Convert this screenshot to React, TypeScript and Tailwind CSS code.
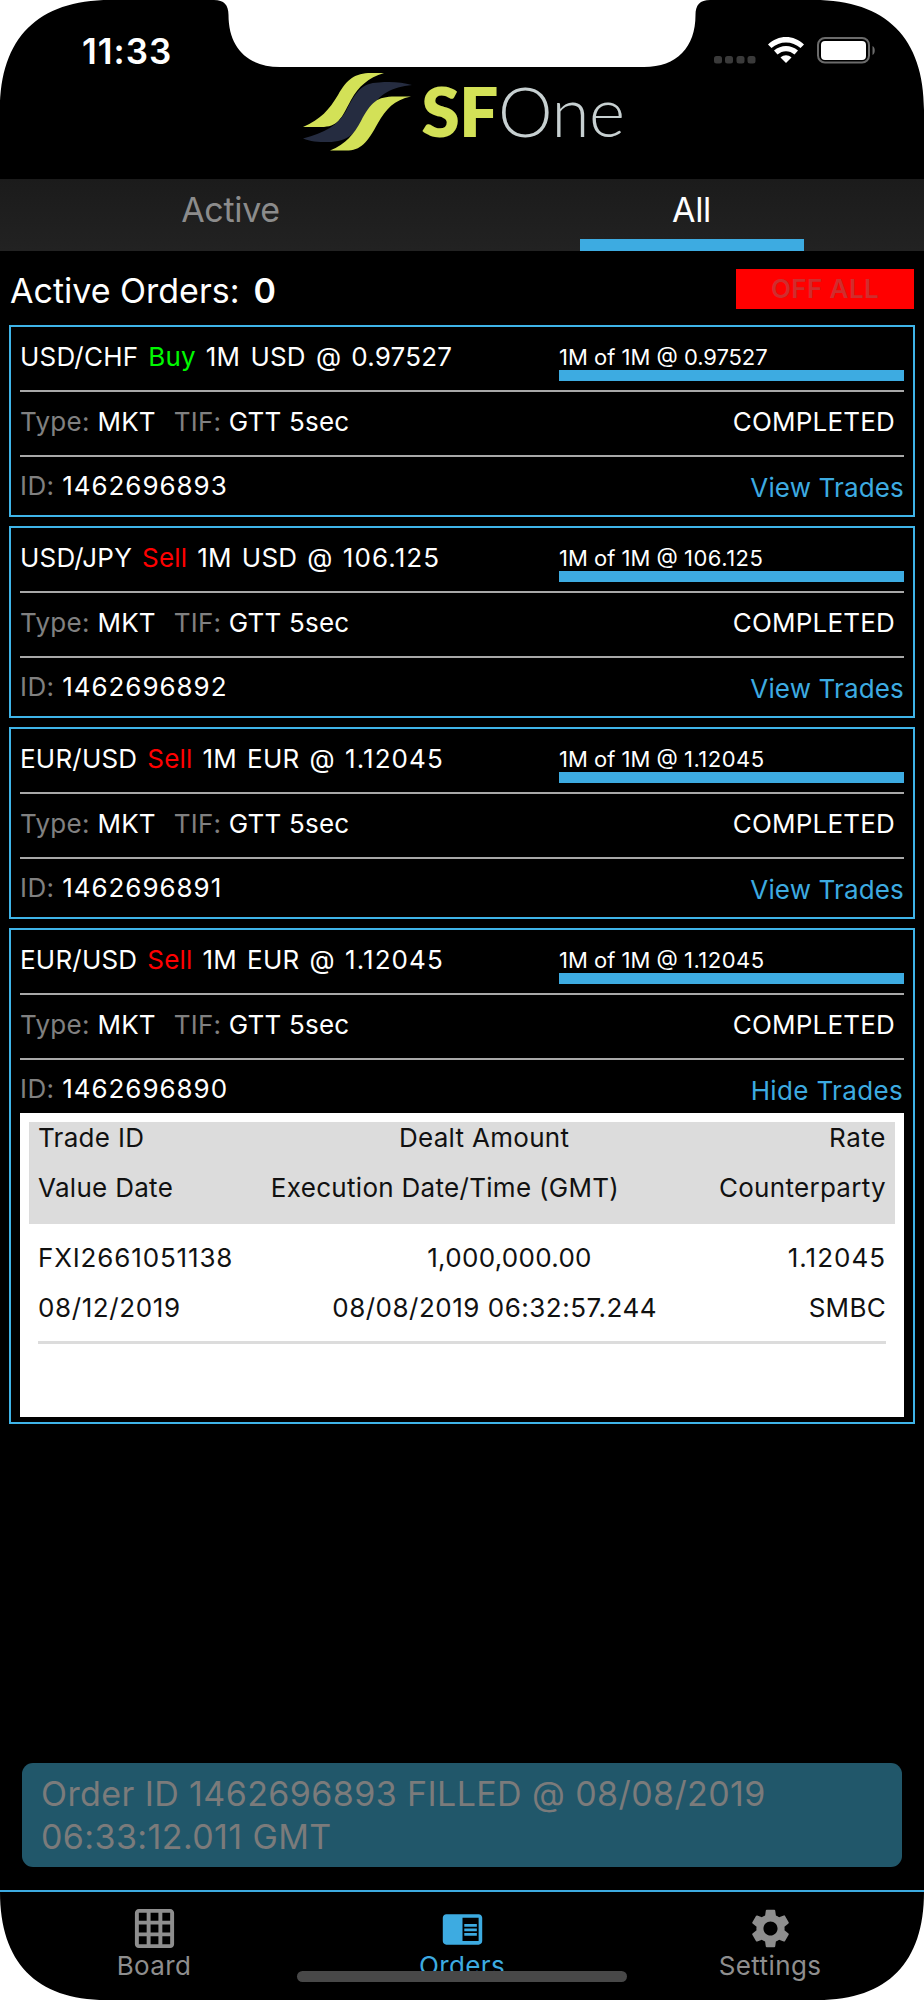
import { MdChromeReaderMode, MdGridOn, MdSettings } from "react-icons/md";
import type { ReactNode } from "react";

type Trade = {
    tradeId: string;
    amount: string;
    rate: string;
    valueDate: string;
    executed: string;
    counterparty: string;
};

type Order = {
    id: string;
    pair: string;
    side: "Buy" | "Sell";
    currency: string;
    rate: string;
    trades?: Trade[];
};

const orders: Order[] = [
    { id: "1462696893", pair: "USD/CHF", side: "Buy", currency: "USD", rate: "0.97527" },
    { id: "1462696892", pair: "USD/JPY", side: "Sell", currency: "USD", rate: "106.125" },
    { id: "1462696891", pair: "EUR/USD", side: "Sell", currency: "EUR", rate: "1.12045" },
    {
        id: "1462696890",
        pair: "EUR/USD",
        side: "Sell",
        currency: "EUR",
        rate: "1.12045",
        trades: [
            {
                tradeId: "FXI2661051138",
                amount: "1,000,000.00",
                rate: "1.12045",
                valueDate: "08/12/2019",
                executed: "08/08/2019 06:32:57.244",
                counterparty: "SMBC",
            },
        ],
    },
];

const ScreenMask = () => (
    <svg className="pointer-events-none absolute inset-0 z-20" width="924" height="2000" viewBox="0 0 924 2000" fill="#fff">
        <path d="M0 0H110C38 0 0 38 0 110Z" />
        <path d="M924 0H814C886 0 924 38 924 110Z" />
        <path d="M0 1892C0 1962 36 2000 106 2000H0Z" />
        <path d="M924 1892C924 1962 888 2000 818 2000H924Z" />
        <path d="M214 0C224 0 228.500 5 228.500 15C228.500 47 247 67 280 67H644C677 67 695.500 47 695.500 15C695.500 5 700 0 710 0Z" />
    </svg>
);

const StatusBar = () => (
    <div className="flex h-[67px] items-start justify-between pr-[48px] pl-[82px]">
        <span className="mt-[31px] text-[35px] leading-[40px] font-semibold tracking-[1px]">11:33</span>
        <svg className="mt-[36px]" width="164" height="30" viewBox="0 0 164 30">
            <g fill="#3a3a3a">
                <rect x="2" y="20" width="8" height="7.500" rx="2.500" />
                <rect x="13" y="20" width="8" height="7.500" rx="2.500" />
                <rect x="24.500" y="20" width="8" height="7.500" rx="2.500" />
                <rect x="35.500" y="20" width="8" height="7.500" rx="2.500" />
            </g>
            <g fill="#fff">
                <path d="M56 8.500C66 -1.500 82 -1.500 92 8.500L88.500 12C80.500 4.500 67.500 4.500 59.500 12Z" />
                <path d="M62 14.500C69 8.500 79 8.500 86 14.500L82.500 18.500C77.500 14 70.500 14 65.500 18.500Z" />
                <path d="M68.500 21.500C72 18.500 76 18.500 79.500 21.500L74 27Z" />
            </g>
            <rect x="106" y="2" width="51" height="24.500" rx="7" fill="none" stroke="#6b6b6b" strokeWidth="2" />
            <rect x="109" y="5" width="45" height="19" rx="4" fill="#fff" />
            <path d="M160.500 10V19C163.500 17.500 163.500 11.500 160.500 10Z" fill="#6b6b6b" />
        </svg>
    </div>
);

const Logo = () => (
    <div className="flex h-[112px] items-start justify-center pl-1">
        <svg className="mt-[5px] shrink-0" width="110" height="80" viewBox="0 0 110 80">
            <path d="M0 55C18 47 26 38 35 23C44 7 52 1 68 1H81C65 6 56 14 48 28C38 47 35 55 18 55Z" fill="#d3e157" />
            <path d="M0 66.500C22 61 35 53 43 39C53 20 58 11 76 10.500C90 9.500 99 10.500 109 13C89 15 76 22 67 38C54 61 45 70 25 70C15 70 7 69.500 0 66.500Z" fill="#252c40" />
            <path d="M27 78.500C43 72 51 62 58 49C68 30 74 24.500 92 24.500H108C91 28 83 37 75 51C64 71 58 78.500 43 78.500Z" fill="#d3e157" />
        </svg>
        <div className="mt-[8px] ml-[8px] flex font-['Lato'] text-[69px] leading-[72px] tracking-[-0.4px]">
            <span className="font-extrabold text-[#d3e157]">SF</span>
            <span className="font-light text-[#c7d0d1]">One</span>
        </div>
    </div>
);

const Tab = ({ label, active }: { label: string; active?: boolean }) => (
    <button className="flex h-full flex-1 flex-col items-center justify-between">
        <span className={`mt-[11px] text-[34px] leading-[40px] tracking-[-0.3px] ${active ? "text-white" : "text-[#8c8c8c]"}`}>
            {label}
        </span>
        {active && <span className="h-3 w-[224px] bg-[#3dabe1]" />}
    </button>
);

const TradesTable = ({ trades }: { trades: Trade[] }) => (
    <div className="h-[304px] bg-white p-[9px] text-[26px] leading-[50px] tracking-[0.3px] text-[#111]">
        <div className="flex h-[102px] flex-col bg-[#dcdcdc] px-[9px]">
            <div className="-mt-[9px] flex justify-between">
                <span>Trade ID</span>
                <span className="mr-[5px]">Dealt Amount</span>
                <span className="tracking-[0.6px]">Rate</span>
            </div>
            <div className="flex justify-between">
                <span>Value Date</span>
                <span className="mr-[2px]">Execution Date/Time (GMT)</span>
                <span>Counterparty</span>
            </div>
        </div>
        {trades.map((t) => (
            <div key={t.tradeId} className="mx-[9px] mt-[9px] border-b-[3px] border-[#dcdcdc] pb-2">
                <div className="flex justify-between">
                    <span className="tracking-[0.85px]">{t.tradeId}</span>
                    <span className="mr-[2px]">{t.amount}</span>
                    <span className="tracking-[1px]">{t.rate}</span>
                </div>
                <div className="flex justify-between">
                    <span className="tracking-[0.6px]">{t.valueDate}</span>
                    <span className="tracking-[0.5px]">{t.executed}</span>
                    <span>{t.counterparty}</span>
                </div>
            </div>
        ))}
    </div>
);

const OrderCard = ({ order }: { order: Order }) => {
    // the "1" glyph is narrow, rates that start with it get looser spacing
    const narrow = order.rate.startsWith("1");

    return (
        <div className={`border-2 border-[#3fb4e8] px-[9px] text-[26px] leading-8 ${order.trades ? "h-[496px]" : "h-[192px]"}`}>
            <div className="flex h-[65px] justify-between border-b-2 border-[#a8a8a8]">
                <div className="mt-[14px] flex gap-[10px] tracking-[0.2px]">
                    <span>{order.pair}</span>
                    <span className={order.side === "Buy" ? "text-[#00f900]" : "text-[#ff0000]"}>{order.side}</span>
                    <span className="[word-spacing:2.6px]">
                        1M {order.currency} @ <span className={narrow ? "tracking-[1.1px]" : ""}>{order.rate}</span>
                    </span>
                </div>
                <div className="mt-[16px] w-[345px]">
                    <div className="h-[27px] text-[22px] leading-[28px]">
                        1M of 1M @ <span className={narrow ? "tracking-[0.5px]" : "tracking-[-0.1px]"}>{order.rate}</span>
                    </div>
                    <div className="h-[11px] bg-[#3dabe1]" />
                </div>
            </div>
            <div className="flex h-[65px] items-center justify-between border-b-2 border-[#a8a8a8] pr-[9px] pb-[3px] tracking-[0.2px]">
                <div className="flex whitespace-pre">
                    <span className="tracking-[0.3px] text-[#808080]">Type: </span>MKT
                    <span className="ml-[18px] text-[#808080]">TIF: </span>GTT 5sec
                </div>
                <span>COMPLETED</span>
            </div>
            <div className="flex h-[53px] items-start justify-between">
                <div className="mt-[13px] whitespace-pre">
                    <span className="tracking-[0.4px] text-[#808080]">ID: </span>
                    <span className="tracking-[0.95px]">{order.id}</span>
                </div>
                {order.trades ? (
                    <button className="mt-[15px] mr-px tracking-[0.35px] text-[#3dabe1]">Hide Trades</button>
                ) : (
                    <button className="mt-[15px] tracking-[0.15px] text-[#3dabe1]">View Trades</button>
                )}
            </div>
            {order.trades && <TradesTable trades={order.trades} />}
        </div>
    );
};

const NavItem = ({ label, icon, active }: { label: string; icon: ReactNode; active?: boolean }) => (
    <button className={`flex flex-1 flex-col items-center ${active ? "text-[#3dabe1]" : "text-[#8e8e8e]"}`}>
        <span className="flex h-[43px] items-center">{icon}</span>
        <span className="text-[26px] leading-[32px] tracking-[0.4px]">{label}</span>
    </button>
);

export default function App() {
    return (
        <div className="relative flex h-[2000px] w-[924px] flex-col overflow-hidden bg-black font-['Inter',sans-serif] text-white">
            <StatusBar />
            <Logo />

            <div className="flex h-[72px] bg-linear-to-b from-[#1b1b1b] to-[#222222] pr-[2px]">
                <Tab label="Active" />
                <Tab label="All" active />
            </div>

            <div className="flex h-[74px] items-start justify-between pr-[10px] pl-[10px]">
                <div className="mt-[20px] flex gap-[14px] text-[34px] leading-[40px]">
                    Active Orders: <span className="font-semibold">0</span>
                </div>
                <button className="mt-[18px] h-[40px] w-[178px] bg-[#ff0000] text-[26px] leading-[40px] font-semibold tracking-[0.4px] text-[#cf2d2d]">
                    OFF ALL
                </button>
            </div>

            <div className="flex flex-1 flex-col gap-[9px] px-[9px]">
                {orders.map((order) => (
                    <OrderCard key={order.id} order={order} />
                ))}
            </div>

            <div className="mx-[22px] mb-[23px] h-[104px] rounded-[11px] bg-[#21576a] px-[19px] py-[10px] text-[34px] leading-[42.500px] tracking-[0.4px] text-[#7b7b7b]">
                Order ID 1462696893 FILLED @ 08/08/2019 06:33:12.011 GMT
            </div>

            <div className="flex h-[110px] border-t-2 border-[#3dabe1] pt-[15px]">
                <NavItem label="Board" icon={<MdGridOn size={47} />} />
                <NavItem label="Orders" icon={<MdChromeReaderMode size={43} />} active />
                <NavItem label="Settings" icon={<MdSettings size={47} />} />
            </div>

            <div className="absolute bottom-[18px] left-[297px] z-10 h-[11px] w-[330px] rounded-full bg-[#484848]" />
            <ScreenMask />
        </div>
    );
}
